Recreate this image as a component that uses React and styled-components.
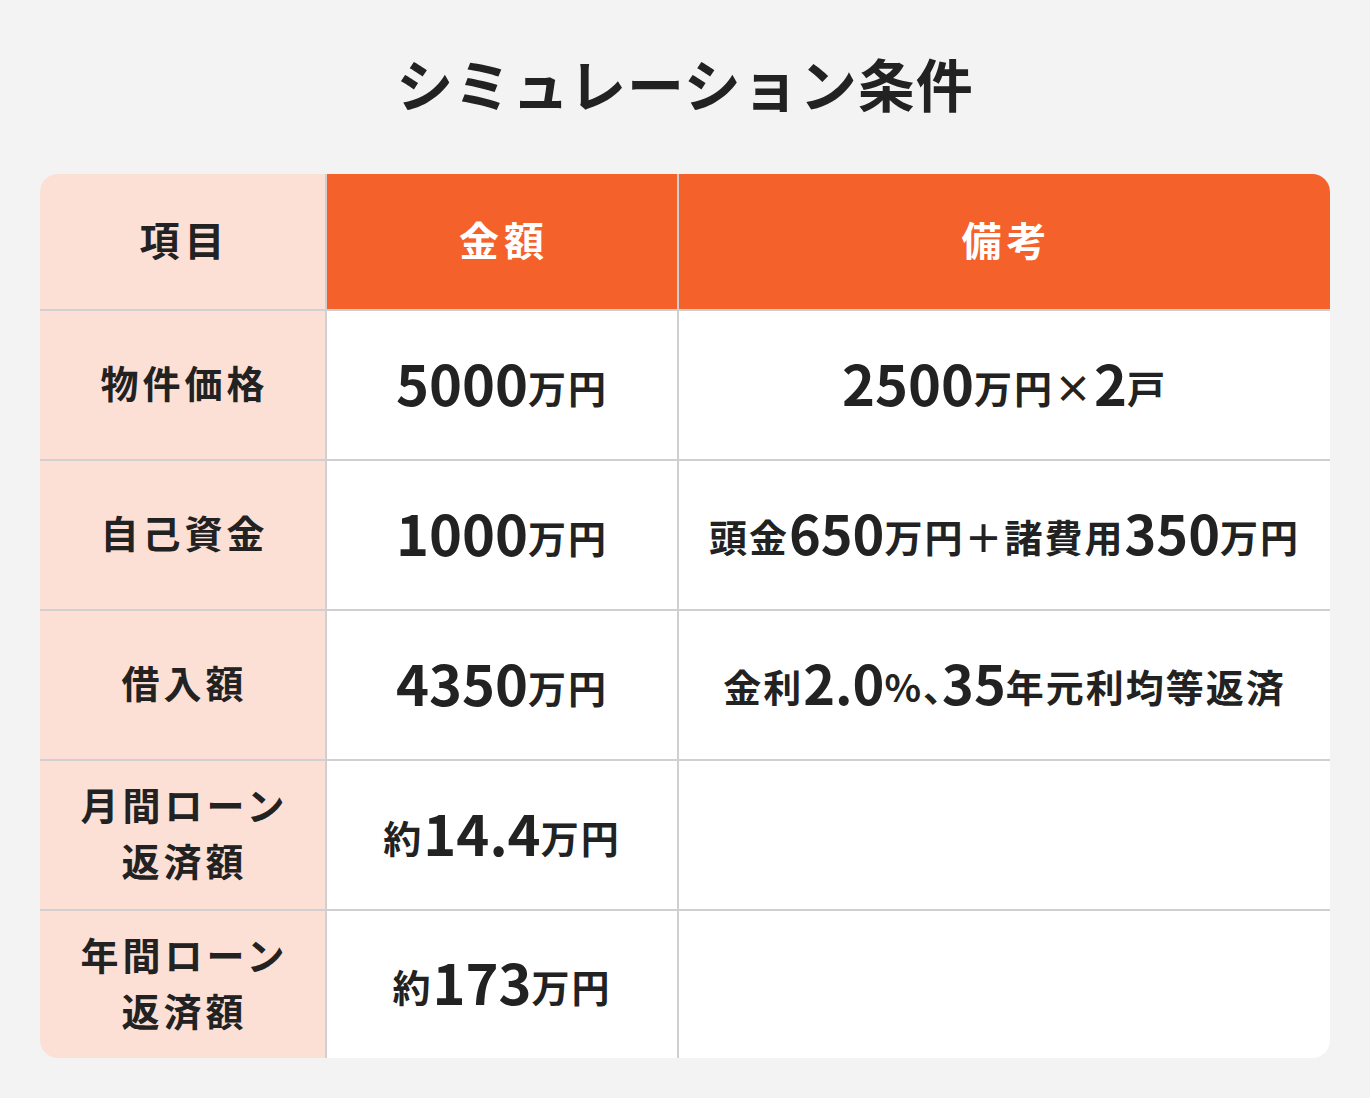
import React from "react";
import styled, { createGlobalStyle } from "styled-components";

const GlobalStyle = createGlobalStyle`
  body {
    margin: 0;
    background: #f3f3f3;
    font-family: "Noto Sans CJK JP", "Noto Sans", sans-serif;
    color: #222;
  }
`;

const Page = styled.div`
  width: 1370px;
  height: 1098px;
  padding: 0 40px;
  box-sizing: border-box;
`;

const Title = styled.h1`
  margin: 0;
  padding-top: 42px;
  height: 174px;
  box-sizing: border-box;
  text-align: center;
  font-size: 57px;
  line-height: 80px;
  font-weight: 700;
  letter-spacing: 1px;
`;

const Table = styled.div`
  display: grid;
  grid-template-columns: 285px 352px 1fr;
  grid-template-rows: 135px repeat(4, 150px) 149px;
  border-radius: 18px;
  overflow: hidden;
`;

const Cell = styled.div`
  display: flex;
  flex-direction: column;
  align-items: center;
  justify-content: center;
  text-align: center;
  box-sizing: border-box;
  padding-bottom: 6px;
  font-weight: 700;
  line-height: 1.4;
  background: ${(p) => (p.$head ? "#f4612a" : p.$label ? "#fce0d6" : "#fff")};
  color: ${(p) => (p.$head ? "#fff" : "#222")};
  border-top: ${(p) => (p.$first ? "none" : "2px solid #d0d0d0")};
  border-left: ${(p) => (p.$col > 0 ? "2px solid #d0d0d0" : "none")};
`;

const Label = styled.span`
  font-size: ${(p) => (p.$big ? 40 : 38)}px;
  letter-spacing: ${(p) => (p.$big ? 5 : 4)}px;
  line-height: 56px;
  margin-right: -4px;
`;

const Value = styled.span`
  white-space: nowrap;
  font-size: 38px;
  letter-spacing: 2px;
`;

const Num = styled.span`
  font-size: ${(p) => p.$size || 56}px;
  letter-spacing: 0;
`;

const Unit = styled.span`
  vertical-align: 3px;
`;

const Comma = styled.span`
  font-feature-settings: "palt";
  letter-spacing: 0;
`;

const rows = [
  {
    label: ["物件価格"],
    amount: ["", "5000", "万円"],
    note: (
      <>
        <Num>2500</Num>
        <Unit>万円×</Unit>
        <Num>2</Num>
        <Unit>戸</Unit>
      </>
    ),
  },
  {
    label: ["自己資金"],
    amount: ["", "1000", "万円"],
    note: (
      <>
        <Unit>頭金</Unit>
        <Num $size={54}>650</Num>
        <Unit>万円＋諸費用</Unit>
        <Num $size={54}>350</Num>
        <Unit>万円</Unit>
      </>
    ),
  },
  {
    label: ["借入額"],
    amount: ["", "4350", "万円"],
    note: (
      <>
        <Unit>金利</Unit>
        <Num $size={54}>2.0</Num>
        <Unit>
          %<Comma>、</Comma>
        </Unit>
        <Num $size={54}>35</Num>
        <Unit>年元利均等返済</Unit>
      </>
    ),
  },
  { label: ["月間ローン", "返済額"], amount: ["約", "14.4", "万円"], note: null },
  { label: ["年間ローン", "返済額"], amount: ["約", "173", "万円"], note: null },
];

export default function App() {
  return (
    <Page>
      <GlobalStyle />
      <Title>シミュレーション条件</Title>
      <Table>
        <Cell $label $first $col={0}>
          <Label $big>項目</Label>
        </Cell>
        <Cell $head $first $col={1}>
          <Label $big>金額</Label>
        </Cell>
        <Cell $head $first $col={2}>
          <Label $big>備考</Label>
        </Cell>
        {rows.map((row, i) => {
          const [pre, n, unit] = row.amount;
          return (
            <React.Fragment key={i}>
              <Cell $label $col={0}>
                {row.label.map((l) => (
                  <Label key={l}>{l}</Label>
                ))}
              </Cell>
              <Cell $col={1}>
                <Value>
                  {pre && <Unit>{pre}</Unit>}
                  <Num>{n}</Num>
                  <Unit>{unit}</Unit>
                </Value>
              </Cell>
              <Cell $col={2}>{row.note && <Value>{row.note}</Value>}</Cell>
            </React.Fragment>
          );
        })}
      </Table>
    </Page>
  );
}
